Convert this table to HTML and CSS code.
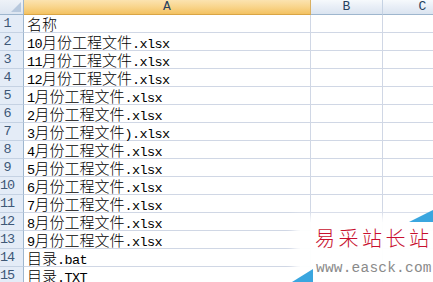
FILE: index.html
```html
<!DOCTYPE html>
<html>
<head>
<meta charset="utf-8">
<link rel="stylesheet" href="styles.css">
</head>
<body>
<div class="sheet">
  <div class="grid">
    <div class="corner"><span class="tri"></span></div>
    <div class="colhead sel">A</div>
    <div class="colhead">B</div>
    <div class="colhead">C</div>

    <div class="rowhead">1</div><div class="cell">名称</div><div class="cell"></div><div class="cell"></div>
    <div class="rowhead">2</div><div class="cell"><span class="l">10</span>月份工程文件<span class="l">.xlsx</span></div><div class="cell"></div><div class="cell"></div>
    <div class="rowhead">3</div><div class="cell"><span class="l">11</span>月份工程文件<span class="l">.xlsx</span></div><div class="cell"></div><div class="cell"></div>
    <div class="rowhead">4</div><div class="cell"><span class="l">12</span>月份工程文件<span class="l">.xlsx</span></div><div class="cell"></div><div class="cell"></div>
    <div class="rowhead">5</div><div class="cell"><span class="l">1</span>月份工程文件<span class="l">.xlsx</span></div><div class="cell"></div><div class="cell"></div>
    <div class="rowhead">6</div><div class="cell"><span class="l">2</span>月份工程文件<span class="l">.xlsx</span></div><div class="cell"></div><div class="cell"></div>
    <div class="rowhead">7</div><div class="cell"><span class="l">3</span>月份工程文件<span class="l">).xlsx</span></div><div class="cell"></div><div class="cell"></div>
    <div class="rowhead">8</div><div class="cell"><span class="l">4</span>月份工程文件<span class="l">.xlsx</span></div><div class="cell"></div><div class="cell"></div>
    <div class="rowhead">9</div><div class="cell"><span class="l">5</span>月份工程文件<span class="l">.xlsx</span></div><div class="cell"></div><div class="cell"></div>
    <div class="rowhead">10</div><div class="cell"><span class="l">6</span>月份工程文件<span class="l">.xlsx</span></div><div class="cell"></div><div class="cell"></div>
    <div class="rowhead">11</div><div class="cell"><span class="l">7</span>月份工程文件<span class="l">.xlsx</span></div><div class="cell"></div><div class="cell"></div>
    <div class="rowhead">12</div><div class="cell"><span class="l">8</span>月份工程文件<span class="l">.xlsx</span></div><div class="cell"></div><div class="cell"></div>
    <div class="rowhead">13</div><div class="cell"><span class="l">9</span>月份工程文件<span class="l">.xlsx</span></div><div class="cell"></div><div class="cell"></div>
    <div class="rowhead">14</div><div class="cell">目录<span class="l">.bat</span></div><div class="cell"></div><div class="cell"></div>
    <div class="rowhead">15</div><div class="cell">目录<span class="l">.TXT</span></div><div class="cell"></div><div class="cell"></div>
  </div>
  <div class="watermark">
    <span class="wm-tri wm-tri-top"></span>
    <div class="wm-title">易采站长站</div>
    <div class="wm-url">www.easck.com</div>
    <span class="wm-tri wm-tri-bottom"></span>
  </div>
</div>
</body>
</html>
```
FILE: styles.css
```css
html, body {
  margin: 0;
  padding: 0;
  background: #fff;
}
.sheet {
  position: relative;
  width: 433px;
  height: 282px;
  overflow: hidden;
}
.grid {
  display: grid;
  grid-template-columns: 24px 287px 72px 80px;
  grid-template-rows: 15px repeat(15, 18px);
}
.grid > div {
  box-sizing: border-box;
}
.corner {
  position: relative;
  background: linear-gradient(#eef2f8, #dce5f1);
  border-right: 1px solid #9eb6ce;
  border-bottom: 1px solid #9eb6ce;
}
.corner .tri {
  position: absolute;
  right: 2px;
  bottom: 2px;
  width: 0;
  height: 0;
  border-left: 10px solid transparent;
  border-bottom: 10px solid #b7c8dd;
}
.colhead {
  background: linear-gradient(#f6f9fc 0%, #e9eff7 45%, #dbe4f0 100%);
  border-right: 1px solid #c5d2e3;
  border-bottom: 1px solid #9eb6ce;
  font-family: "Liberation Mono", monospace;
  font-size: 13px;
  line-height: 14px;
  color: #27415f;
  text-align: center;
}
.colhead.sel {
  background: linear-gradient(#fbe3b0 0%, #f9d68f 45%, #f3c262 100%);
  border-right: 1px solid #d9b062;
  border-bottom: 1px solid #d9a545;
}
.rowhead {
  background: #e4ecf7;
  border-right: 1px solid #9eb6ce;
  border-bottom: 1px solid #c5d2e3;
  font-family: "Liberation Mono", monospace;
  font-size: 13.5px;
  line-height: 18px;
  color: #3e5877;
  text-align: center;
  padding-right: 9px;
  letter-spacing: -1px;
}
.cell {
  border-right: 1px solid #d0d7e5;
  border-bottom: 1px solid #d0d7e5;
  font-family: "Noto Sans CJK SC", sans-serif;
  font-weight: 300;
  font-size: 15px;
  line-height: 17px;
  color: #000;
  padding-left: 3px;
  white-space: nowrap;
}
.cell .l {
  font-family: "Liberation Mono", monospace;
  font-weight: 400;
  font-size: 13.5px;
  letter-spacing: -0.6px;
  line-height: 1;
}
.watermark {
  position: absolute;
  left: 300px;
  top: 222px;
  width: 150px;
  height: 70px;
  background: rgba(255, 255, 255, 0.96);
  box-shadow: 0 0 8px 6px rgba(255, 255, 255, 0.96);
}
.wm-title {
  position: absolute;
  left: 15px;
  top: 3px;
  font-family: "Noto Sans CJK SC", serif;
  font-weight: 300;
  font-size: 20px;
  line-height: 26px;
  letter-spacing: 3.5px;
  color: #c8102e;
  white-space: nowrap;
}
.wm-url {
  position: absolute;
  left: 16px;
  top: 38px;
  font-family: "Liberation Mono", monospace;
  font-size: 14.5px;
  line-height: 16px;
  letter-spacing: 0.2px;
  color: #8a8a8a;
  white-space: nowrap;
}
.wm-tri {
  position: absolute;
  width: 0;
  height: 0;
  border-left: 22px solid transparent;
  border-bottom: 13px solid #3aa6df;
}
.wm-tri-top {
  left: 109px;
  top: -12px;
  border-left-width: 24px;
  border-bottom-width: 12px;
}
.wm-tri-bottom {
  left: -8px;
  top: 47px;
  border-left-width: 21px;
  border-bottom-width: 13px;
}
```
